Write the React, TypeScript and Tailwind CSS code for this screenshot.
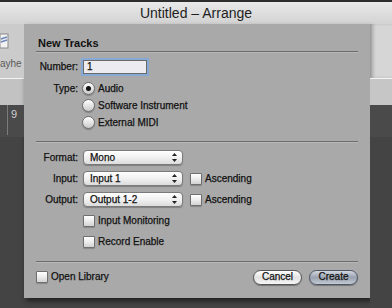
import React from 'react';

const Divider = () => <div className="h-px shrink-0 bg-[#6b6b6b] shadow-[0_1px_0_#b9b9b9]" />;

const Radio = ({ checked = false }: { checked?: boolean }) => (
  <span className="flex h-[13px] w-[13px] shrink-0 items-center justify-center rounded-full border border-[#6f6f6f] bg-gradient-to-b from-[#ffffff] via-[#e4e4e4] to-[#c9c9c9] shadow-[0_1px_1px_rgba(0,0,0,0.25)]">
    {checked && <span className="h-[5px] w-[5px] rounded-full bg-[#111]" />}
  </span>
);

const Checkbox = () => (
  <span className="h-[12px] w-[12px] shrink-0 rounded-[1px] border border-[#6f6f6f] bg-gradient-to-b from-[#ffffff] via-[#ececec] to-[#d2d2d2] shadow-[0_1px_1px_rgba(0,0,0,0.2)]" />
);

const Popup = ({ value }: { value: string }) => (
  <div className="flex h-[15px] w-[100px] shrink-0 items-center rounded-[4px] border border-[#7a7a7a] bg-gradient-to-b from-[#ffffff] via-[#f1f1f1] to-[#dcdcdc] pl-[6px] pr-[5px] shadow-[0_1px_1px_rgba(0,0,0,0.25)]">
    <span className="flex-1">{value}</span>
    <svg width="5" height="9" viewBox="0 0 5 9">
      <path d="M2.5 0 L5 3 L0 3 Z" fill="#222" />
      <path d="M0 6 L5 6 L2.5 9 Z" fill="#222" />
    </svg>
  </div>
);

const Label = ({ children }: { children: React.ReactNode }) => (
  <span className="w-[42px] shrink-0 text-right">{children}</span>
);

const SideColumn = ({ left }: { left?: boolean }) => (
  <div className={`flex flex-col ${left ? 'w-[24px] shrink-0' : 'flex-1'}`}>
    <div
      className={`relative h-[54px] overflow-hidden ${
        left ? 'bg-[#cbcbcb]' : 'bg-[#d6d6d6] shadow-[inset_4px_0_4px_-2px_rgba(0,0,0,0.35)]'
      }`}
    >
      {left && (
        <>
          <svg className="absolute left-0 top-[9px]" width="10" height="17" viewBox="0 0 10 17">
            <rect x="0" y="1" width="8" height="14" fill="#f2f2f2" stroke="#8a8a8a" strokeWidth="1" />
            <path d="M1 6 L7 4 M1 9 L7 7" stroke="#6b87b8" strokeWidth="1.5" />
          </svg>
          <span className="absolute left-0 top-[32px] whitespace-nowrap text-[10px] text-[#5a5a5a]">ayhe</span>
        </>
      )}
    </div>
    <div className="h-px bg-[#f4f4f4]" />
    <div className={`h-[26px] ${left ? 'bg-[#c2c2c2]' : 'bg-[#c6c6c6]'}`} />
    <div className="relative h-[32px] bg-[#4a4a4a]">
      {left && (
        <>
          <span className="absolute left-[11px] top-[2px] text-[11px] leading-[14px] text-[#cfcfcf]">9</span>
          <span className="absolute left-[7px] top-0 h-[30px] w-px bg-[#7c7c7c]" />
        </>
      )}
    </div>
    <div className="flex-1 bg-[#444444]" />
  </div>
);

export default function App() {
  return (
    <div className="flex h-[308px] w-[392px] flex-col overflow-hidden bg-[#444444] font-['Liberation_Sans',Arial,sans-serif] text-[#111]">
      <div className="h-[2px] bg-[#2e2e2e]" />
      <div className="flex h-[22px] items-center justify-center bg-gradient-to-b from-[#e9e9e9] to-[#d3d3d3] text-[14px] text-[#1e1e1e]">
        Untitled – Arrange
      </div>
      <div className="flex flex-1">
        <SideColumn left />
        <div className="flex h-[274px] w-[346px] shrink-0 flex-col bg-[#a9a9a9] px-3 pt-3 text-[10px] leading-[12px] [-webkit-text-stroke:0.25px_#111] shadow-[2px_3px_5px_rgba(0,0,0,0.55)]">
          <div className="flex h-[14px] items-center pl-[2px] text-[11px] font-bold [-webkit-text-stroke:0px]">New Tracks</div>
          <div className="mt-[1px]">
            <Divider />
          </div>

          <div className="mt-[8px] flex h-[14px] items-center gap-[5px]">
            <Label>Number:</Label>
            <div className="flex h-[14px] w-[64px] items-center border border-[#6a6a6a] bg-[#ececf0] pl-[3px] shadow-[0_0_0_2px_#86a9d6]">
              1
            </div>
          </div>

          <div className="mt-[6px] flex h-[17px] items-center gap-[5px]">
            <Label>Type:</Label>
            <div className="-ml-[1px] flex items-center gap-[3px]">
              <Radio checked />
              <span>Audio</span>
            </div>
          </div>
          <div className="flex h-[17px] items-center gap-[3px] pl-[46px]">
            <Radio />
            <span>Software Instrument</span>
          </div>
          <div className="flex h-[17px] items-center gap-[3px] pl-[46px]">
            <Radio />
            <span>External MIDI</span>
          </div>

          <div className="mt-[10px]">
            <Divider />
          </div>

          <div className="mt-[5px] flex h-[21px] items-center gap-[5px]">
            <Label>Format:</Label>
            <Popup value="Mono" />
          </div>
          <div className="flex h-[21px] items-center gap-[5px]">
            <Label>Input:</Label>
            <Popup value="Input 1" />
            <div className="ml-[2px] flex items-center gap-[3px]">
              <Checkbox />
              <span>Ascending</span>
            </div>
          </div>
          <div className="flex h-[21px] items-center gap-[5px]">
            <Label>Output:</Label>
            <Popup value="Output 1-2" />
            <div className="ml-[2px] flex items-center gap-[3px]">
              <Checkbox />
              <span>Ascending</span>
            </div>
          </div>
          <div className="flex h-[21px] items-center gap-[3px] pl-[47px]">
            <Checkbox />
            <span>Input Monitoring</span>
          </div>
          <div className="flex h-[21px] items-center gap-[3px] pl-[47px]">
            <Checkbox />
            <span>Record Enable</span>
          </div>

          <div className="mt-[9px]">
            <Divider />
          </div>

          <div className="mt-[7px] flex h-[16px] items-center">
            <div className="flex items-center gap-[3px]">
              <Checkbox />
              <span>Open Library</span>
            </div>
            <div className="ml-auto flex gap-[7px]">
              <button className="flex h-[15px] w-[49px] items-center justify-center rounded-full border border-[#555] bg-gradient-to-b from-[#ffffff] via-[#e2e2e2] to-[#f6f6f6] text-[10px] text-[#111] shadow-[0_1px_1px_rgba(0,0,0,0.3)]">
                Cancel
              </button>
              <button className="flex h-[15px] w-[49px] items-center justify-center rounded-full border border-[#4d5462] bg-gradient-to-b from-[#d3d8e0] via-[#9aa2b0] to-[#c3cad5] text-[10px] text-[#111] shadow-[0_1px_1px_rgba(0,0,0,0.3)]">
                Create
              </button>
            </div>
          </div>
        </div>
        <SideColumn />
      </div>
    </div>
  );
}
